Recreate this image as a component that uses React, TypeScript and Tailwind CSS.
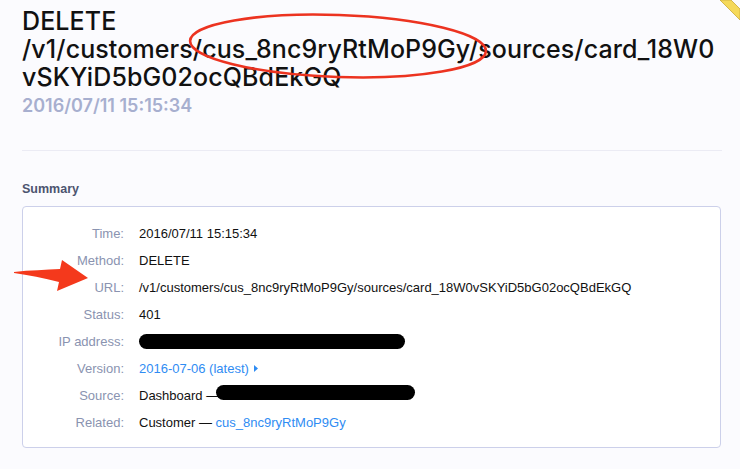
import React from 'react';

const rows = [
  { label: 'Time:', value: '2016/07/11 15:15:34' },
  { label: 'Method:', value: 'DELETE' },
  { label: 'URL:', value: '/v1/customers/cus_8nc9ryRtMoP9Gy/sources/card_18W0vSKYiD5bG02ocQBdEkGQ' },
  { label: 'Status:', value: '401' },
];

const Redacted = ({ width }: { width: number }) => (
  <span className="inline-block h-[15px] rounded-full bg-black" style={{ width }} />
);

const Row = ({ label, children }: { label: string; children: React.ReactNode }) => (
  <div className="flex h-[27px] items-center">
    <div className="w-[101px] text-right text-[#8a93b0]">{label}</div>
    <div className="ml-[15px] flex items-center text-[#111]">{children}</div>
  </div>
);

export default function App() {
  return (
    <div className="relative h-[469px] w-[740px] overflow-hidden bg-[#fbfbfe]">
      <div className="w-[700px] pl-[22px] pt-[7px]" style={{ boxSizing: 'content-box' }}>
        <h1
          className="break-words text-[25px] font-medium leading-[28px] tracking-[0.1px] text-[#111]"
          style={{ fontFamily: 'Inter, "Noto Sans", sans-serif' }}
        >
          DELETE /v1/customers/cus_8nc9ryRtMoP9Gy/sources/card_18W0vSKYiD5bG02ocQBdEkGQ
        </h1>
        <div
          className="mt-[4px] text-[18px] font-semibold leading-[22px] text-[#a7afcf]"
          style={{ fontFamily: 'Inter, "Noto Sans", sans-serif' }}
        >
          2016/07/11 15:15:34
        </div>

        <div className="mt-[33px] h-px bg-[#ebebf4]" />

        <div
          className="mt-[31px] text-[12.5px] font-bold leading-[14px] text-[#4c5470]"
          style={{ fontFamily: '"Liberation Sans", Arial, sans-serif' }}
        >
          Summary
        </div>

        <div
          className="mt-[10px] w-[699px] rounded-[4px] border border-[#ccd0ea] bg-white pb-[11px] pt-[13px] text-[13px]"
          style={{ fontFamily: '"Liberation Sans", Arial, sans-serif' }}
        >
          {rows.map((r) => (
            <Row key={r.label} label={r.label}>
              {r.value}
            </Row>
          ))}
          <Row label="IP address:">
            <Redacted width={266} />
          </Row>
          <Row label="Version:">
            <span className="text-[#2f8cf3]">2016-07-06 (latest)</span>
            <svg className="ml-[5px]" width="4" height="7" viewBox="0 0 4 7">
              <path d="M0 0 L4 3.5 L0 7 Z" fill="#2f8cf3" />
            </svg>
          </Row>
          <Row label="Source:">
            <span>Dashboard —</span>
            <span className="-ml-[3px]">
              <Redacted width={199} />
            </span>
          </Row>
          <Row label="Related:">
            <span>Customer —&nbsp;</span>
            <span className="text-[#2f8cf3]">cus_8nc9ryRtMoP9Gy</span>
          </Row>
        </div>
      </div>

      {/* annotations */}
      <svg className="pointer-events-none absolute left-0 top-0" width="740" height="469">
        <ellipse
          cx="338"
          cy="46"
          rx="148"
          ry="31"
          fill="none"
          stroke="#ec3320"
          strokeWidth="2.6"
          transform="rotate(2 338 46)"
        />
        <path
          d="M14 272 C30 270 46 270 60 269 L62 260 L88 278 L57 291 L59 282 C44 278 28 275 14 273 Z"
          fill="#f4391c"
        />
        <path d="M720 0 L740 20 L740 9 L731 0 Z" fill="#f5d95a" stroke="#c9a93a" strokeWidth="0.8" />
      </svg>
    </div>
  );
}
